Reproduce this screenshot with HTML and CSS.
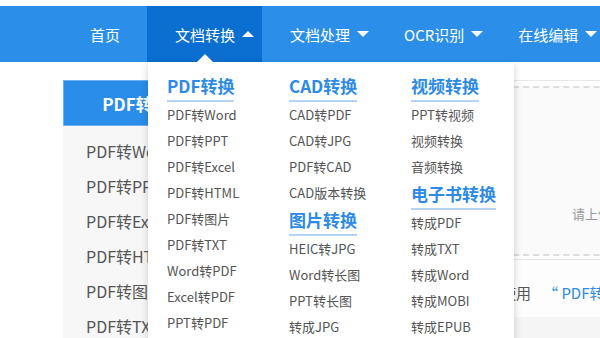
FILE: index.html
```html
<!DOCTYPE html>
<html lang="zh-CN">
<head>
  <meta charset="UTF-8" />
  <title>PDF转换</title>
  <meta name="viewport" content="width=device-width, initial-scale=1.0">
  <link rel="stylesheet" href="styles.css">
</head>
<body>

  <div class="topbar"></div>

  <div class="nav">
    <div class="nav-item nav-home">首页</div>
    <div class="nav-item active">
      文档转换<span class="caret up"></span>

      <div class="dropdown">
        <div class="dd-col">
          <div class="dd-title">PDF转换</div>
          <a class="dd-link">PDF转Word</a>
          <a class="dd-link">PDF转PPT</a>
          <a class="dd-link">PDF转Excel</a>
          <a class="dd-link">PDF转HTML</a>
          <a class="dd-link">PDF转图片</a>
          <a class="dd-link">PDF转TXT</a>
          <a class="dd-link">Word转PDF</a>
          <a class="dd-link">Excel转PDF</a>
          <a class="dd-link">PPT转PDF</a>
        </div>
        <div class="dd-col">
          <div class="dd-title">CAD转换</div>
          <a class="dd-link">CAD转PDF</a>
          <a class="dd-link">CAD转JPG</a>
          <a class="dd-link">PDF转CAD</a>
          <a class="dd-link">CAD版本转换</a>
          <div class="dd-title">图片转换</div>
          <a class="dd-link">HEIC转JPG</a>
          <a class="dd-link">Word转长图</a>
          <a class="dd-link">PPT转长图</a>
          <a class="dd-link">转成JPG</a>
        </div>
        <div class="dd-col">
          <div class="dd-title">视频转换</div>
          <a class="dd-link">PPT转视频</a>
          <a class="dd-link">视频转换</a>
          <a class="dd-link">音频转换</a>
          <div class="dd-title">电子书转换</div>
          <a class="dd-link">转成PDF</a>
          <a class="dd-link">转成TXT</a>
          <a class="dd-link">转成Word</a>
          <a class="dd-link">转成MOBI</a>
          <a class="dd-link">转成EPUB</a>
        </div>
      </div>
    </div>
    <div class="nav-item">文档处理<span class="caret"></span></div>
    <div class="nav-item">OCR识别<span class="caret"></span></div>
    <div class="nav-item">在线编辑<span class="caret"></span></div>
  </div>

  <div class="page">
    <div class="sidebar">
      <div class="side-head">PDF转换</div>
      <ul class="side-list">
        <li>PDF转Word</li>
        <li>PDF转PPT</li>
        <li>PDF转Excel</li>
        <li>PDF转HTML</li>
        <li>PDF转图片</li>
        <li>PDF转TXT</li>
      </ul>
    </div>

    <div class="main">
      <div class="upload-card">
        <div class="drop-zone">
          <p class="drop-hint">请上传文件</p>
        </div>
      </div>
      <div class="tip">请使用<span class="tip-link">“ PDF转Word ”</span></div>
      <div class="main-rest"></div>
    </div>
  </div>

</body>
</html>
```

FILE: styles.css
```css
body {
  margin: 0;
  font-family: "Noto Sans CJK SC", "Noto Sans", sans-serif;
  background: #ffffff;
  color: #555;
  overflow: hidden;
}

.topbar {
  height: 6px;
  background: #ffffff;
}

/* top navigation */
.nav {
  display: flex;
  height: 56px;
  padding-left: 62px;
  background: #2b8fea;
  position: relative;
  z-index: 10;
}

.nav-item {
  position: relative;
  display: flex;
  align-items: center;
  padding: 0 7px 0 28px;
  color: #ffffff;
  font-size: 15px;
  white-space: nowrap;
}

.nav-home {
  padding-right: 27px;
}

.nav-item.active {
  background: #0a6fd1;
  padding-right: 8px;
}

.nav-item.active::after {
  content: "";
  position: absolute;
  left: 50%;
  bottom: 0;
  margin-left: -8px;
  border: 8px solid transparent;
  border-top: 0;
  border-bottom-color: #ffffff;
}

.caret {
  display: inline-block;
  margin-left: 7px;
  border-left: 6px solid transparent;
  border-right: 6px solid transparent;
  border-top: 6px solid #ffffff;
}

.caret.up {
  border-top: 0;
  border-bottom: 6px solid #ffffff;
}

/* dropdown panel */
.dropdown {
  position: absolute;
  top: 56px;
  left: 1px;
  width: 347px;
  height: 300px;
  padding: 10px 0 0 19px;
  display: grid;
  grid-template-columns: 122px 122px 103px;
  background: #ffffff;
  box-shadow: 0 2px 8px rgba(0, 0, 0, 0.18);
  color: #555;
}

.dd-col {
  display: flex;
  flex-direction: column;
  align-items: flex-start;
}

.dd-title {
  font-size: 17px;
  font-weight: bold;
  line-height: 27px;
  padding-bottom: 1px;
  color: #2d8ae6;
  border-bottom: 2px solid #b6d3f2;
}

.dd-link {
  font-size: 13px;
  line-height: 26px;
  color: #555;
}

/* page body */
.page {
  display: flex;
  padding: 18px 0 0 63px;
}

.sidebar {
  width: 146px;
  flex-shrink: 0;
  background: #f7f7f7;
  height: 300px;
}

.side-head {
  height: 46px;
  line-height: 46px;
  text-align: center;
  background: #2a8de9;
  border: 1px solid #6fb2f0;
  box-sizing: border-box;
  color: #ffffff;
  font-size: 17px;
  font-weight: bold;
}

.side-list {
  list-style: none;
  margin: 0;
  padding: 8px 0 0 23px;
}

.side-list li {
  line-height: 35px;
  font-size: 16px;
  color: #555;
  white-space: nowrap;
}

.main {
  flex: 1;
  margin-left: 16px;
}

.upload-card {
  border: 1px solid #e8e8e8;
  border-right: 0;
  padding: 5px 0 3px 5px;
}

.drop-zone {
  height: 166px;
  background: #fafafa;
  border: 2px dashed #dddddd;
  border-right: 0;
}

.drop-hint {
  margin: 0;
  padding: 117px 0 0 339px;
  font-size: 13px;
  line-height: 18px;
  color: #999;
  white-space: nowrap;
}

.tip {
  padding: 21px 0 12px 261px;
  line-height: 24px;
  font-size: 15px;
  color: #555;
  background: #fdfdfd;
  white-space: nowrap;
}

.tip-link {
  margin-left: 12px;
  color: #2d8ae6;
}

.main-rest {
  height: 60px;
  background: #f5f5f5;
}
```
